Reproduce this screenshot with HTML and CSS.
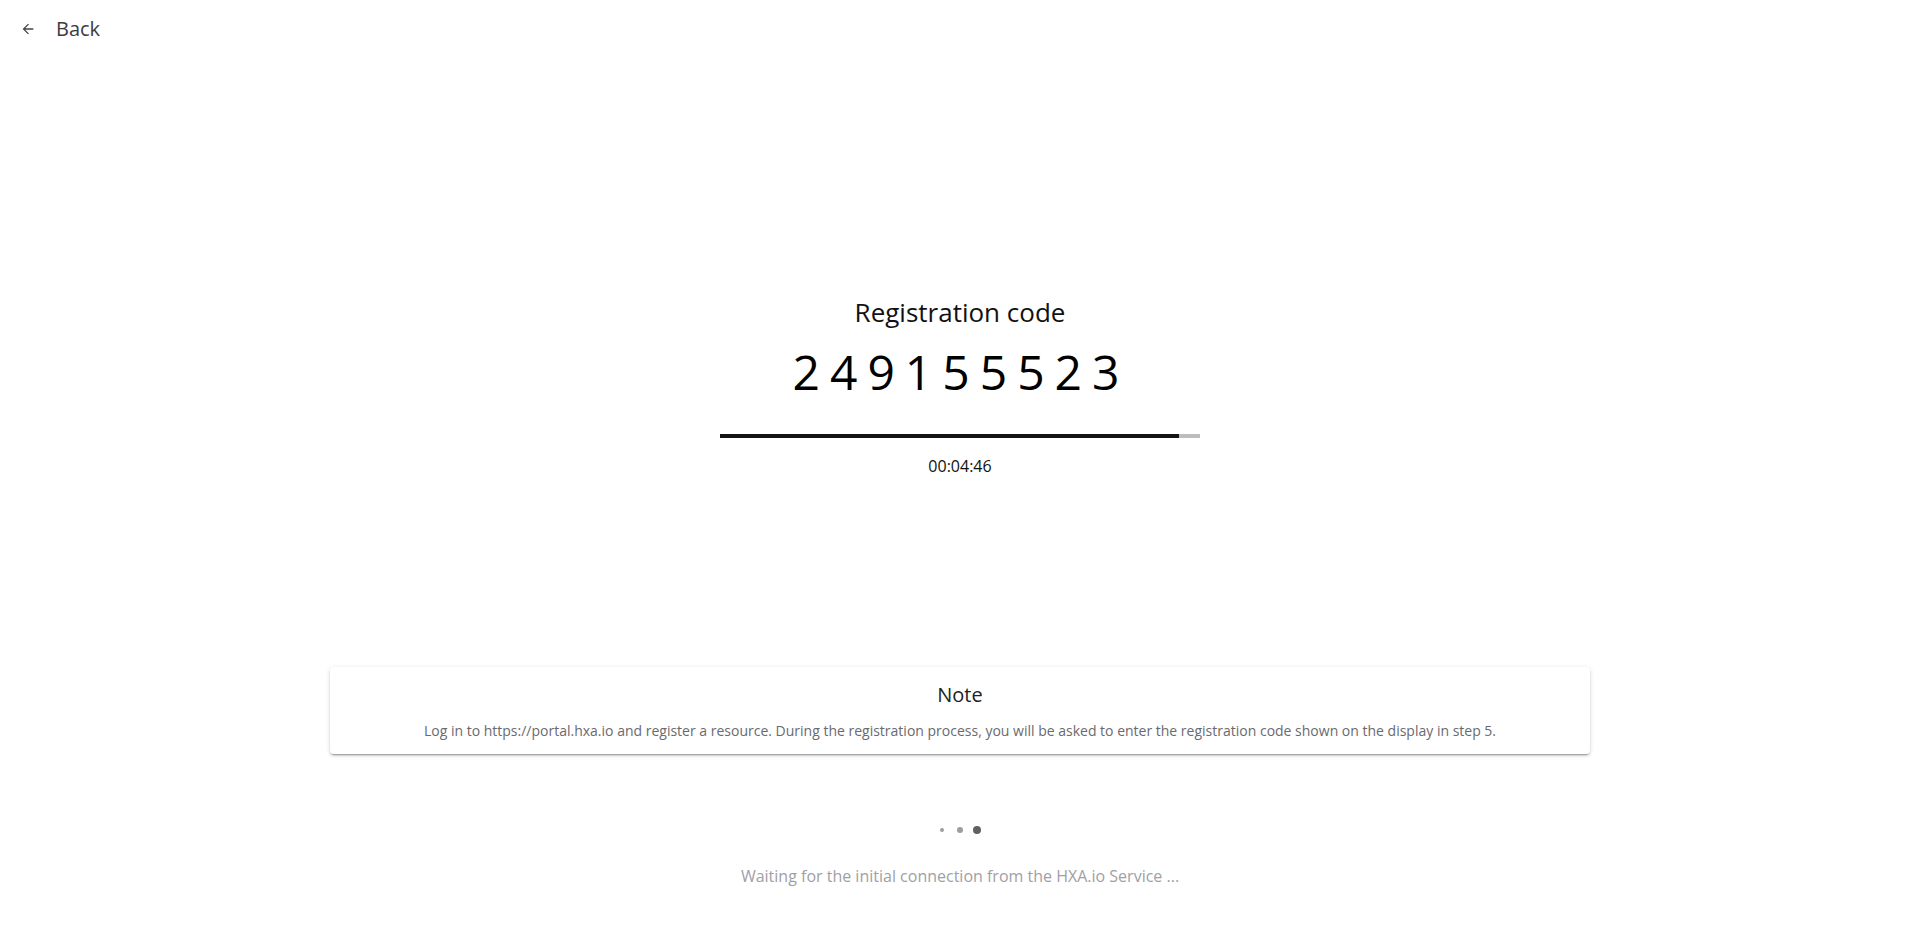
FILE: index.html
```html
<!DOCTYPE html>
<html lang="en">
<head>
<meta charset="utf-8">
<title>Registration code</title>
<link rel="stylesheet" href="styles.css">
</head>
<body>
<header class="topbar">
  <button class="back" type="button">
    <svg class="back-icon" viewBox="0 0 24 24" aria-hidden="true"><path d="M20 11H7.83l5.59-5.59L12 4l-8 8 8 8 1.41-1.41L7.83 13H20v-2z"/></svg>
    <span class="back-label">Back</span>
  </button>
</header>
<main class="main">
  <section class="code-block">
    <h1 class="code-title">Registration code</h1>
    <div class="code-value">249155523</div>
    <div class="progress"><div class="progress-fill" style="width: 95.6%"></div></div>
    <div class="timer">00:04:46</div>
  </section>
  <section class="note-card">
    <h2 class="note-title">Note</h2>
    <p class="note-text">Log in to https://portal.hxa.io and register a resource. During the registration process, you will be asked to enter the registration code shown on the display in step 5.</p>
  </section>
  <div class="dots">
    <span class="dot dot-s"></span>
    <span class="dot dot-m"></span>
    <span class="dot dot-l"></span>
  </div>
  <p class="waiting">Waiting for the initial connection from the HXA.io Service ...</p>
</main>
</body>
</html>
```

FILE: styles.css
```css
* { box-sizing: border-box; }
html, body {
  margin: 0;
  padding: 0;
  background: #ffffff;
  font-family: "Open Sans", "Noto Sans", sans-serif;
}
.topbar {
  padding: 17px 0 0 20px;
  height: 41px;
}
.back {
  display: flex;
  align-items: center;
  border: 0;
  background: none;
  padding: 0;
  margin: 0;
  font-family: inherit;
  cursor: pointer;
}
.back-icon {
  width: 16px;
  height: 16px;
  fill: #444444;
  margin-right: 20px;
}
.back-label {
  font-size: 20px;
  line-height: 24px;
  color: #3c3c3c;
}
.main {
  display: flex;
  flex-direction: column;
  align-items: center;
}
.code-block {
  margin-top: 253px;
  display: flex;
  flex-direction: column;
  align-items: center;
}
.code-title {
  margin: 0;
  font-size: 26px;
  line-height: 36px;
  font-weight: 400;
  color: #111111;
}
.code-value {
  margin-top: 10px;
  padding-left: 2px;
  font-size: 48px;
  line-height: 64px;
  letter-spacing: 10px;
  color: #000000;
}
.progress {
  margin-top: 30px;
  width: 480px;
  height: 4px;
  background: #bdbdbd;
}
.progress-fill {
  height: 100%;
  background: #141414;
}
.timer {
  margin-top: 16px;
  font-size: 16px;
  line-height: 24px;
  color: #111111;
}
.note-card {
  margin-top: 189px;
  width: 1260px;
  padding: 14px 16px 13px;
  border-radius: 4px;
  background: #ffffff;
  box-shadow: 0 3px 1px -2px rgba(0,0,0,0.2), 0 2px 2px 0 rgba(0,0,0,0.14), 0 1px 5px 0 rgba(0,0,0,0.12);
  text-align: center;
}
.note-title {
  margin: 0;
  font-size: 20px;
  line-height: 28px;
  font-weight: 400;
  color: #222222;
}
.note-text {
  margin: 12px 0 0;
  font-size: 14px;
  line-height: 20px;
  color: #6a6a6e;
}
.dots {
  margin-top: 72px;
  height: 8px;
  display: flex;
  align-items: center;
}
.dot {
  display: block;
  border-radius: 50%;
  background: #9e9e9e;
}
.dot-s { width: 4px; height: 4px; }
.dot-m { width: 6px; height: 6px; margin: 0 10px 0 13px; }
.dot-l { width: 8px; height: 8px; background: #616161; }
.waiting {
  margin: 30px 0 0;
  font-size: 16px;
  line-height: 24px;
  color: #9fa0a6;
}
```
